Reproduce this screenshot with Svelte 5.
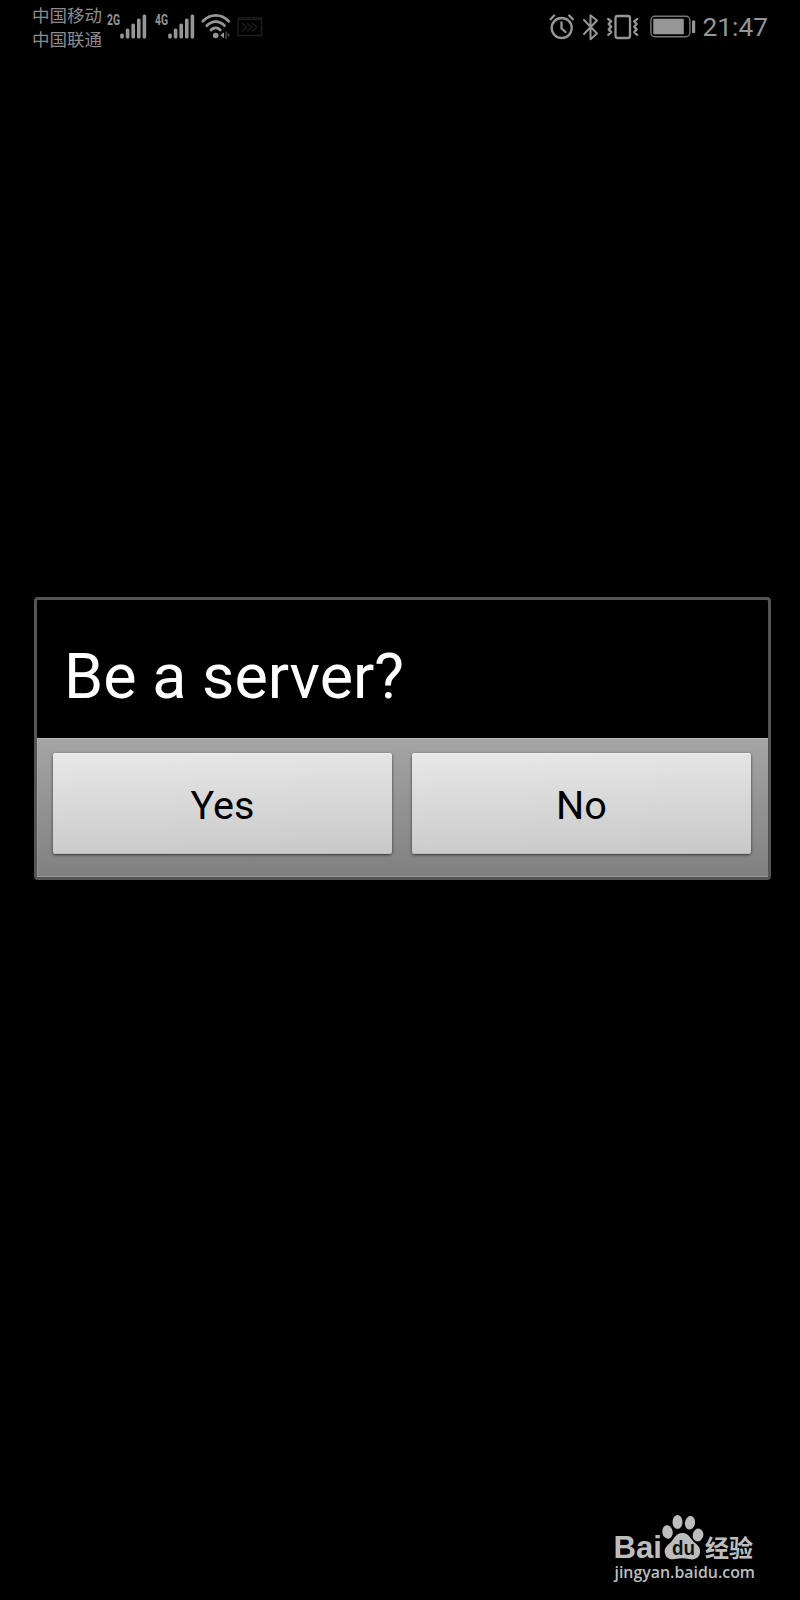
<script>
	const carriers = ['中国移动', '中国联通'];
	const networks = ['2G', '4G'];
	const bars = [5, 10, 15, 20, 24];

	let answer = $state('');
	const choices = ['Yes', 'No'];
</script>

<main class="screen">
	<header class="status">
		<div class="carriers">
			{#each carriers as name}
				<span>{name}</span>
			{/each}
		</div>

		{#each networks as label}
			<svg class="signal" viewBox="0 0 42 32" width="42" height="32">
				<text x="0" y="15" textLength="13" lengthAdjust="spacingAndGlyphs">{label}</text>
				{#each bars as h, i}
					<rect x={13.2 + i * 5.6} y={28.5 - h} width="3.6" height={h} rx="1.5" />
				{/each}
			</svg>
		{/each}

		<svg class="wifi" viewBox="0 0 32 32" width="32" height="32">
			<g class="line">
				<path d="M2.8 11.2C10.5 3.5 21 3.5 28.7 11.2" />
				<path d="M6.8 15.7C12 10.2 19.5 10.2 24.5 15.7" />
				<path d="M11 20C13.5 17.3 17.8 17.3 20.3 20" />
			</g>
			<circle cx="15.7" cy="25.5" r="2.8" />
			<path d="M20.3 25.3l3.7-3v6z" />
			<path class="faint" d="M25.3 21.5h1.5V29h-1.5zM27.5 22.5l2.8 2.7-2.8 1.8z" />
		</svg>

		<svg class="cast" viewBox="0 0 26 20" width="26" height="20">
			<rect x="1" y="1" width="23.5" height="17.5" />
			<path d="M1 2.5h23.5M5 6l4.5 4L5 14.500M10 6l4.500 4-4.500 4.500M15 6l4.500 4-4.500 4.500" />
		</svg>

		<div class="system">
			<svg class="alarm" viewBox="0 0 26 26" width="26" height="26">
				<circle cx="12.7" cy="14" r="10" />
				<path d="M12.5 8.5v6l4 3.5M1.6 5.2l3.6-3.7M20.2 1.5l3.6 3.7" />
			</svg>
			<svg class="bluetooth" viewBox="0 0 18 28" width="18" height="28">
				<path d="M2 7l13 13.5-6.5 5.7V2.2L15 7.5 2 21" />
			</svg>
			<svg class="vibrate" viewBox="0 0 34 28" width="34" height="28">
				<rect x="9.5" y="3" width="14.5" height="22" rx="2.2" />
				<path d="M2.2 6l3 2.3-2.5 2.700 2.500 2.700-2.500 2.700 2.500 2.700-3 2.700M31.200 6l-3 2.300 2.500 2.700-2.500 2.700 2.500 2.700-2.500 2.700 3 2.700" />
			</svg>
			<svg class="battery" viewBox="0 0 46 24" width="46" height="24">
				<rect class="shell" x=".9" y="1.2" width="39" height="20.6" rx="4" />
				<rect x="3.3" y="3.8" width="30.5" height="15.4" rx="1" />
				<rect x="42" y="5.2" width="3.2" height="13" rx="1.5" />
			</svg>
			<time>21:47</time>
		</div>
	</header>

	<section class="dialog" role="dialog" aria-labelledby="question">
		<h1 id="question">Be a server?</h1>
		<div class="actions">
			{#each choices as choice}
				<button onclick={() => (answer = choice)}>{choice}</button>
			{/each}
		</div>
	</section>

	<footer>
		<svg class="logo" viewBox="0 0 150 76" width="150" height="76">
			<text class="bai" x="1.5" y="43" textLength="48.5" lengthAdjust="spacingAndGlyphs">Bai</text>
			<g class="paw" transform="translate(-2)">
				<ellipse cx="57.5" cy="17" rx="5.2" ry="6.8" transform="rotate(-10 57.5 17)" />
				<ellipse cx="67.5" cy="7" rx="5" ry="7" />
				<ellipse cx="80" cy="7.8" rx="5" ry="6.8" transform="rotate(10 80 7.8)" />
				<ellipse cx="88" cy="20" rx="5.3" ry="6.5" transform="rotate(12 88 20)" />
				<path d="M72.5 18c-7 0-8.5 6.5-13 10.5-4 3.5-5.500 6-4.500 10 1.200 5 5.500 6.500 10 5.600 5-1 9-1 14 0 6 1.200 10.300-1.200 11-6.500.6-4.500-1.500-7-5.500-10.200C80 23.700 79 18 72.500 18z" />
			</g>
			<text class="du" x="60" y="40" textLength="23" lengthAdjust="spacingAndGlyphs">du</text>
			<text class="jingyan" x="93" y="42" textLength="48" lengthAdjust="spacingAndGlyphs">经验</text>
			<text class="url" x="2.5" y="62.5" textLength="140.5" lengthAdjust="spacingAndGlyphs">jingyan.baidu.com</text>
		</svg>
	</footer>
</main>

<style>
	:global(body) {
		background: #000;
	}

	.screen {
		box-sizing: border-box;
		width: 800px;
		height: 1600px;
		display: flex;
		flex-direction: column;
		background: #000;
		font-family: Roboto, "Noto Sans CJK SC", sans-serif;
	}

	svg {
		display: block;
		flex: none;
		overflow: visible;
	}

	.status {
		height: 56px;
		display: flex;
		align-items: flex-start;
		padding: 0 32px;
		color: #969696;
		fill: #969696;
	}

	.carriers {
		display: flex;
		flex-direction: column;
		width: 75px;
		padding-top: 3px;
		font: 17.5px/24px "Noto Sans CJK SC", sans-serif;
		color: #8c8c8c;
	}

	.signal {
		margin: 10px 6px 0 0;
	}

	.signal text {
		font: bold 14.5px Roboto, sans-serif;
	}

	.wifi {
		margin: 10px 6px 0 -3px;
	}

	.line {
		fill: none;
		stroke: #969696;
		stroke-width: 2.7;
		stroke-linecap: round;
	}

	.faint {
		fill: #444;
	}

	.cast {
		margin: 17px 0 0 -1px;
		fill: none;
		stroke: #1c1c1c;
		stroke-width: 1.5;
	}

	.system {
		display: flex;
		align-items: flex-start;
		margin-left: auto;
	}

	.alarm,
	.bluetooth,
	.vibrate {
		fill: none;
		stroke: #969696;
		stroke-width: 2.3;
		stroke-linecap: round;
		stroke-linejoin: round;
	}

	.alarm {
		margin: 14px 7px 0 0;
	}

	.bluetooth {
		margin: 13px 6px 0 0;
		stroke-width: 2;
	}

	.vibrate {
		margin: 13px 10px 0 0;
	}

	.battery {
		margin: 15px 7px 0 0;
	}

	.shell {
		fill: none;
		stroke: #777;
		stroke-width: 1.4;
	}

	time {
		font-size: 26.3px;
		line-height: 32px;
		margin-top: 11px;
	}

	.dialog {
		box-sizing: border-box;
		width: 737px;
		height: 283px;
		margin: 541px 0 0 34px;
		border: 3px solid #555;
		border-radius: 4px;
		display: flex;
		flex-direction: column;
	}

	h1 {
		box-sizing: border-box;
		height: 138px;
		margin: 0;
		padding: 39px 0 0 27px;
		font-size: 62.9px;
		line-height: 76px;
		font-weight: 400;
		color: #fff;
	}

	.actions {
		flex: 1;
		display: flex;
		gap: 20px;
		padding: 15px 17px 23px 16px;
		background: linear-gradient(#a5a5a5, #808080);
		box-shadow: inset 0 1px #b8b8b8, inset 0 -1px #999, inset 1px 0 rgba(255, 255, 255, 0.12);
	}

	button {
		flex: 1;
		padding: 4px 0 0;
		border: 0;
		border-radius: 3px;
		background: linear-gradient(178deg, #e8e8e8, #c8c8c8);
		box-shadow: 0 1px 3px #333, inset 0 1px #eee, inset 0 -1px #bbb;
		font: 39.6px/48px Roboto, sans-serif;
		color: #000;
	}

	footer {
		display: flex;
		justify-content: flex-end;
		margin: auto 38px 9px 0;
	}

	.logo {
		fill: #bdbdbd;
	}

	.bai {
		font: bold 32px "Liberation Sans", sans-serif;
	}

	.du {
		font: bold 21px "Liberation Sans", sans-serif;
		fill: #111;
	}

	.jingyan {
		font: bold 24px "Noto Sans CJK SC", sans-serif;
	}

	.url {
		font: 600 17px "Open Sans", sans-serif;
	}
</style>
